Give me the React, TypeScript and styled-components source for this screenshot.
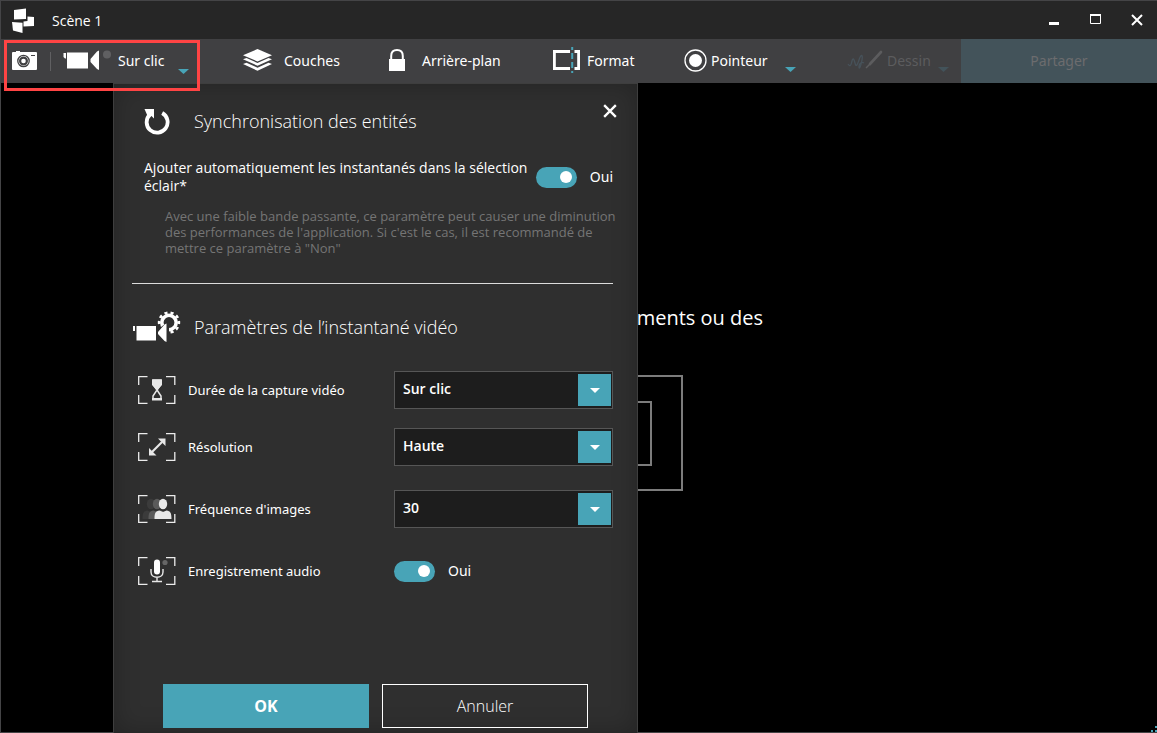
import React from "react";
import styled, { createGlobalStyle, css } from "styled-components";

const TEAL = "#48a4b7";
const LABEL_FONT = '"Noto Sans", "Open Sans", sans-serif';

const GlobalStyle = createGlobalStyle`
  *, *::before, *::after { box-sizing: border-box; }
  body {
    margin: 0;
    background: #000;
    color: #fff;
    font-family: "Open Sans", "Noto Sans", sans-serif;
    font-size: 14px;
  }
  button, select, input { font: inherit; color: inherit; margin: 0; }
  svg { display: block; flex: none; }
`;

const Window = styled.div`
  position: relative;
  display: flex;
  flex-direction: column;
  min-height: 100vh;
  border: 1px solid #444446;
  border-right: 0;
`;

const TitleBar = styled.header`
  display: flex;
  align-items: center;
  height: 38px;
  padding: 0 14px 0 10px;
  background: #262626;
`;

const WindowTitle = styled.h1`
  flex: 1;
  margin: 0 0 0 17px;
  font-size: 14px;
  font-weight: 400;
`;

const PlainButton = styled.button`
  display: flex;
  align-items: center;
  padding: 0;
  border: 0;
  background: none;
  text-align: left;
`;

const WindowControls = styled.div`
  display: flex;
  gap: 29px;
`;

const Toolbar = styled.nav`
  position: relative;
  display: grid;
  grid-template-columns: 242px 146px 164px 131px 163px 1fr 196px;
  height: 44px;
  background: #404042;
  font-family: ${LABEL_FONT};
`;

const ToolButton = styled(PlainButton)<{ $gap: number; $disabled?: boolean }>`
  gap: ${(p) => p.$gap}px;
  padding-bottom: 2px;
  white-space: nowrap;
  ${(p) => p.$disabled && css`color: #5c5c5e;`}
`;

const CaptureGroup = styled.div`
  display: flex;
  align-items: center;
  gap: 12px;
  padding-left: 11px;
`;

const ToolDivider = styled.span`
  width: 1px;
  height: 19px;
  background: #606062;
`;

const CaretSlot = styled.span<{ $before: number }>`
  align-self: flex-end;
  margin: 0 0 9px ${(p) => p.$before}px;
`;

const ShareButton = styled.button`
  grid-column: 7;
  padding-bottom: 3px;
  border: 0;
  background: #43535a;
  color: #6c6c6e;
`;

const Highlight = styled.div`
  position: absolute;
  top: 1px;
  left: 3px;
  z-index: 2;
  width: 196px;
  height: 51px;
  border: 3px solid #ff4444;
  pointer-events: none;
`;

const Stage = styled.main`
  position: relative;
  display: flex;
  flex: 1;
  background: #000;
`;

const Backdrop = styled.div`
  display: flex;
  flex: 1;
  flex-direction: column;
  align-items: center;
  gap: 42px;
  padding-top: 220px;
`;

const Prompt = styled.p`
  width: 368px;
  margin: 0;
  font-size: 20px;
  line-height: 30px;
  text-align: right;
`;

const DropFrame = styled.div`
  display: grid;
  place-items: center;
  width: 208px;
  height: 116px;
  border: 2px solid #7c7c7c;
`;

const DropInner = styled.div`
  width: 146px;
  height: 65px;
  border: 2px solid #7c7c7c;
`;

const Panel = styled.section`
  position: absolute;
  top: 0;
  bottom: -1px;
  left: 112px;
  display: flex;
  flex-direction: column;
  width: 525px;
  padding: 20px 24px 5px 18px;
  border: 1px solid #3e3e3e;
  border-bottom: 0;
  background: #2f2f2f;
  box-shadow: inset 0 0 24px rgba(0, 0, 0, 0.25);
`;

const PanelHeader = styled.header`
  display: flex;
  align-items: center;
  height: 34px;
  padding-left: 12px;
`;

const SectionTitle = styled.h2`
  flex: 1;
  margin: 0;
  font-size: 18px;
  font-weight: 300;
  line-height: 26px;
`;

const IconSlot = styled.span<{ $width: number }>`
  width: ${(p) => p.$width}px;
  flex: none;
`;

const CloseButton = styled(PlainButton)`
  align-self: flex-start;
  margin-right: -4px;
`;

const SyncRow = styled.div`
  display: flex;
  align-items: center;
  margin-top: 21px;
  padding-left: 12px;
`;

const SyncLabel = styled.label`
  flex: 1;
  line-height: 18px;
`;

const Switch = styled.input`
  appearance: none;
  display: flex;
  flex: none;
  align-items: center;
  justify-content: flex-end;
  width: 41px;
  height: 21px;
  padding: 5px;
  border-radius: 11px;
  background: ${TEAL};

  &::before {
    content: "";
    width: 12px;
    height: 12px;
    border-radius: 50%;
    background: #fff;
  }
  &:not(:checked) {
    justify-content: flex-start;
    background: #666;
  }
`;

const SwitchState = styled.span`
  margin-left: 13px;
  padding-bottom: 2px;
  font-family: ${LABEL_FONT};
`;

const HelpText = styled.p`
  margin: 13px -8px 0 0;
  padding-left: 33px;
  color: #757575;
  font-size: 13px;
  line-height: 16px;
`;

const Rule = styled.hr`
  width: 100%;
  height: 1px;
  margin: 27px 0 0;
  border: 0;
  background: #dcdcdc;
`;

const VideoHeader = styled.header`
  display: flex;
  align-items: center;
  height: 34px;
  margin-top: 26px;
`;

const Settings = styled.div<{ $gap: number; $top?: number }>`
  display: flex;
  flex-direction: column;
  gap: ${(p) => p.$gap}px;
  margin-top: ${(p) => p.$top ?? 0}px;
`;

const SettingRow = styled.div`
  display: grid;
  grid-template-columns: 50px 206px 1fr;
  align-items: center;
  height: 38px;
  padding-left: 6px;
`;

const SettingLabel = styled.label`
  font-family: ${LABEL_FONT};
  font-size: 13px;
`;

const SwitchGroup = styled.div`
  display: flex;
  align-items: center;
`;

const SelectBox = styled.div`
  display: grid;
  height: 38px;
  border: 1px solid #565656;
  background: #1d1d1d;

  & > * { grid-area: 1 / 1; }
`;

const Select = styled.select`
  appearance: none;
  width: 100%;
  padding: 0 40px 3px 8px;
  border: 0;
  background: transparent;
  font-weight: 600;
`;

const SelectArrow = styled.span`
  display: grid;
  place-items: center;
  justify-self: end;
  width: 33px;
  margin: 2px 1px;
  background: ${TEAL};
  pointer-events: none;
`;

const Actions = styled.footer`
  display: flex;
  gap: 13px;
  margin-top: auto;
  padding: 24px 25px 0 31px;
`;

const ActionButton = styled.button<{ $primary?: boolean }>`
  flex: 1;
  height: 44px;
  border: 1px solid ${(p) => (p.$primary ? TEAL : "#fff")};
  background: ${(p) => (p.$primary ? TEAL : "transparent")};
  font-size: 16px;
  font-weight: ${(p) => (p.$primary ? 700 : 300)};
`;

const Grip = styled.svg`
  position: absolute;
  right: 0;
  bottom: 0;
`;

const Caret = ({ color = TEAL, width = 11 }: { color?: string; width?: number }) => (
  <svg width={width} height="5" viewBox="0 0 10 5" preserveAspectRatio="none" fill={color} aria-hidden>
    <path d="M0 0h10L5 5z" />
  </svg>
);

const LogoIcon = () => (
  <svg width="24" height="26" viewBox="0 0 24 26" fill="#fff" aria-hidden>
    <path d="M3 3 15 1.500V12L3 12.500z" />
    <path d="M16.500 9.500 23 10v9l-10.500.500v-5l4-.5z" />
    <path d="M1 15l10.500.700V26L2 23.500z" />
  </svg>
);

const CameraIcon = () => (
  <svg width="26" height="20" viewBox="0 0 26 20" aria-hidden>
    <path fill="#fff" d="M1 1h3V0h4v1h16a1 1 0 0 1 1 1v16a1 1 0 0 1-1 1H1a1 1 0 0 1-1-1V2a1 1 0 0 1 1-1z" />
    <circle cx="11.500" cy="10" r="5.700" fill="#fff" stroke="#404042" strokeWidth="1.300" />
    <circle cx="11.500" cy="10" r="3.400" fill="#fff" stroke="#404042" strokeWidth="2.200" />
    <path stroke="#404042" d="M19 4.500h4" />
  </svg>
);

const VideoIcon = () => (
  <svg width="49" height="20" viewBox="0 0 49 20" aria-hidden>
    <path fill="#fff" d="M.500 3h2.500v5.500H2L.500 7zM4 2.500h21v16H4zM27.500 9l6.500-7.500 2-1V20l-2-1-6.500-7z" />
    <circle cx="44" cy="4.500" r="4" fill="#606062" />
  </svg>
);

const LayersIcon = () => (
  <svg width="30" height="22" viewBox="0 0 30 22" fill="#fff" aria-hidden>
    <path d="M14.500 0 29 6.200 14.500 12.500 0 6.200z" />
    <path d="M0 10.200 3.500 9l11 5 11-5 3.500 1.200-14.500 6.600z" />
    <path d="M0 14.900 3.500 13.700l11 5 11-5 3.500 1.200L14.500 21.800z" />
  </svg>
);

const LockIcon = () => (
  <svg width="16" height="22" viewBox="0 0 16 22" aria-hidden>
    <path fill="none" stroke="#fff" strokeWidth="2" d="M2.200 11V7C2.200 3 4.500 1 8 1s5.800 2 5.800 6v4" />
    <path fill="#fff" d="M0 10h16v12H0z" />
  </svg>
);

const FormatIcon = () => (
  <svg width="28" height="26" viewBox="0 0 28 26" fill="none" aria-hidden>
    <path stroke="#fff" strokeWidth="2.800" d="M17 4.500H1.400v17H17M21.500 4.500h4.100v17h-4.100" />
    <path stroke={TEAL} strokeWidth="2" strokeDasharray="6 3" strokeDashoffset="3" d="M19.200 0v26" />
  </svg>
);

const PointerIcon = () => (
  <svg width="23" height="23" viewBox="0 0 23 23" aria-hidden>
    <circle cx="11.500" cy="11.500" r="10.500" fill="none" stroke="#fff" strokeWidth="1.300" />
    <circle cx="11.500" cy="11.500" r="6.500" fill="#fff" />
  </svg>
);

const DrawIcon = () => (
  <svg width="36" height="20" viewBox="0 0 36 20" fill="none" aria-hidden>
    <path stroke="#47525a" strokeWidth="1.300" d="M1 14c2 3 3 2 4-3 1-4 2-2 3 2s2 3 4-3 4-6 3 0-3 10-3 7 2-6 5-4" />
    <path stroke="#5c5c5e" strokeWidth="2.600" strokeLinecap="round" d="M34 2 23 14" />
    <path stroke="#5c5c5e" strokeWidth="1.500" d="m23 14-4 4" />
  </svg>
);

const CrossIcon = ({ size, weight }: { size: number; weight: number }) => (
  <svg width={size} height={size} viewBox="0 0 12 12" stroke="#fff" strokeWidth={weight} aria-hidden>
    <path d="m1 1 10 10M11 1 1 11" />
  </svg>
);

const SyncIcon = () => (
  <svg width="27" height="27" viewBox="0 0 27 27" aria-hidden>
    <path fill="none" stroke="#fff" strokeWidth="3.800" d="M18.200 5A10.500 10.500 0 1 1 6 6.500" />
    <path fill="#fff" d="M.500 1H10v9.500L7.500 8 4 9z" />
  </svg>
);

const VideoGearIcon = () => (
  <svg width="49" height="34" viewBox="0 0 49 34" aria-hidden>
    <clipPath id="gear-clip">
      <path d="M24 0h25v24H37V11L29 17h-5z" />
    </clipPath>
    <g fill="none" stroke="#fff" clipPath="url(#gear-clip)">
      <circle cx="37" cy="12.500" r="7.200" strokeWidth="3.600" />
      <circle cx="37" cy="12.500" r="9.900" strokeWidth="2.600" pathLength="20" strokeDasharray="1 1" strokeDashoffset=".5" />
    </g>
    <path fill="#fff" d="M1 16h2v5H1zM4.500 16H24v14.500H4.500zM26 22l6.500-7.500 2-1V32l-2-1-6.500-7z" />
  </svg>
);

const Framed = ({ children }: { children: React.ReactNode }) => (
  <svg width="38" height="28" viewBox="0 0 38 28" aria-hidden>
    <path fill="none" stroke="#ececec" strokeWidth="1.300" d="M9.500.700H.700V9M28 .700h8.800V9M9.500 27.300H.700V19M28 27.300h8.800V19" />
    {children}
  </svg>
);

const HourglassArt = () => (
  <>
    <path fill="none" stroke="#e8e8e8" strokeWidth="1.500" d="M15 23v-3l4-6-4-6V4h8v4l-4 6 4 6v3" />
    <path fill="#e8e8e8" d="M14 3.500h10V9l-4.500 5h-1L14 9zM14 22h10v2.500H14z" />
  </>
);

const ResizeArt = () => (
  <>
    <path stroke="#e8e8e8" strokeWidth="2.200" d="M14 19 24 9" />
    <path fill="#e8e8e8" d="M20 5.500h7.500V13zM11 15v7.500h7.500z" />
  </>
);

const PersonShape = ({ x, fill }: { x: number; fill: string }) => (
  <g transform={`translate(${x} 0)`} fill={fill}>
    <ellipse cx="9" cy="9" rx="4.200" ry="5.200" />
    <path d="M.500 24c0-6 1-8 5-8.500L9 17l3.500-1.500c4 .5 5 2.500 5 8.500z" />
  </g>
);

const FramesArt = () => (
  <>
    <PersonShape x={4} fill="#3b3b3b" />
    <PersonShape x={10} fill="#5a5a5a" />
    <PersonShape x={16} fill="#e8e8e8" />
  </>
);

const MicArt = () => (
  <>
    <rect x="16" y="2.500" width="6" height="15" rx="3" fill="#fff" />
    <path fill="none" stroke="#e8e8e8" strokeWidth="1.400" d="M13 12v3c0 7 12 7 12 0v-3M19 20v4M14 24.500h10" />
    <circle cx="27" cy="5.500" r="2.600" fill="#666" />
  </>
);

type SettingSelectProps = { id: string; label: string; art: React.ReactNode; options: string[] };

const SettingSelect = ({ id, label, art, options }: SettingSelectProps) => (
  <SettingRow>
    <Framed>{art}</Framed>
    <SettingLabel htmlFor={id}>{label}</SettingLabel>
    <SelectBox>
      <Select id={id}>
        {options.map((o) => (
          <option key={o}>{o}</option>
        ))}
      </Select>
      <SelectArrow>
        <Caret color="#fff" width={10} />
      </SelectArrow>
    </SelectBox>
  </SettingRow>
);

export default function App() {
  return (
    <>
      <GlobalStyle />
      <Window>
        <TitleBar>
          <LogoIcon />
          <WindowTitle>Scène 1</WindowTitle>
          <WindowControls>
            <PlainButton aria-label="Réduire">
              <svg width="12" height="12" aria-hidden>
                <path stroke="#fff" strokeWidth="3" d="M0 9.500h10" />
              </svg>
            </PlainButton>
            <PlainButton aria-label="Agrandir">
              <svg width="12" height="12" fill="none" aria-hidden>
                <path stroke="#fff" d="M.500 1v8.500h10V1" />
                <path stroke="#fff" strokeWidth="2" d="M0 1h11" />
              </svg>
            </PlainButton>
            <PlainButton aria-label="Fermer la fenêtre">
              <CrossIcon size={12} weight={2} />
            </PlainButton>
          </WindowControls>
        </TitleBar>

        <Toolbar>
          <CaptureGroup>
            <PlainButton aria-label="Instantané photo">
              <CameraIcon />
            </PlainButton>
            <ToolDivider />
            <ToolButton $gap={6}>
              <VideoIcon />
              Sur clic
            </ToolButton>
            <CaretSlot $before={2}>
              <Caret />
            </CaretSlot>
          </CaptureGroup>
          <ToolButton $gap={11}>
            <LayersIcon />
            Couches
          </ToolButton>
          <ToolButton $gap={17}>
            <LockIcon />
            Arrière-plan
          </ToolButton>
          <ToolButton $gap={6}>
            <FormatIcon />
            Format
          </ToolButton>
          <ToolButton $gap={4}>
            <PointerIcon />
            Pointeur
            <CaretSlot $before={13}>
              <Caret />
            </CaretSlot>
          </ToolButton>
          <ToolButton $gap={4} $disabled disabled>
            <DrawIcon />
            Dessin
            <CaretSlot $before={3}>
              <Caret color="#43535a" />
            </CaretSlot>
          </ToolButton>
          <ShareButton disabled>Partager</ShareButton>
          <Highlight />
        </Toolbar>

        <Stage>
          <Backdrop>
            <Prompt>ments ou des</Prompt>
            <DropFrame>
              <DropInner />
            </DropFrame>
          </Backdrop>

          <Panel role="dialog" aria-label="Synchronisation des entités">
            <PanelHeader>
              <IconSlot $width={50}>
                <SyncIcon />
              </IconSlot>
              <SectionTitle>Synchronisation des entités</SectionTitle>
              <CloseButton aria-label="Fermer">
                <CrossIcon size={14} weight={2} />
              </CloseButton>
            </PanelHeader>

            <SyncRow>
              <SyncLabel htmlFor="auto-add">
                Ajouter automatiquement les instantanés dans la sélection éclair*
              </SyncLabel>
              <Switch id="auto-add" type="checkbox" role="switch" defaultChecked />
              <SwitchState>Oui</SwitchState>
            </SyncRow>
            <HelpText>
              Avec une faible bande passante, ce paramètre peut causer une diminution des
              performances de l'application. Si c'est le cas, il est recommandé de mettre ce
              paramètre à "Non"
            </HelpText>
            <Rule />

            <VideoHeader>
              <IconSlot $width={62}>
                <VideoGearIcon />
              </IconSlot>
              <SectionTitle>Paramètres de l’instantané vidéo</SectionTitle>
            </VideoHeader>

            <Settings $gap={24} $top={27}>
              <Settings $gap={19}>
                <SettingSelect
                  id="duration"
                  label="Durée de la capture vidéo"
                  art={<HourglassArt />}
                  options={["Sur clic"]}
                />
                <SettingSelect id="resolution" label="Résolution" art={<ResizeArt />} options={["Haute"]} />
              </Settings>
              <SettingSelect id="rate" label="Fréquence d'images" art={<FramesArt />} options={["30"]} />
              <SettingRow>
                <Framed>
                  <MicArt />
                </Framed>
                <SettingLabel htmlFor="audio">Enregistrement audio</SettingLabel>
                <SwitchGroup>
                  <Switch id="audio" type="checkbox" role="switch" defaultChecked />
                  <SwitchState>Oui</SwitchState>
                </SwitchGroup>
              </SettingRow>
            </Settings>

            <Actions>
              <ActionButton $primary>OK</ActionButton>
              <ActionButton>Annuler</ActionButton>
            </Actions>
          </Panel>
        </Stage>
        <Grip width="6" height="6" fill={TEAL} aria-hidden>
          <path d="M4 0h2v2H4zM0 4h2v2H0zM4 4h2v2H4z" />
        </Grip>
      </Window>
    </>
  );
}
